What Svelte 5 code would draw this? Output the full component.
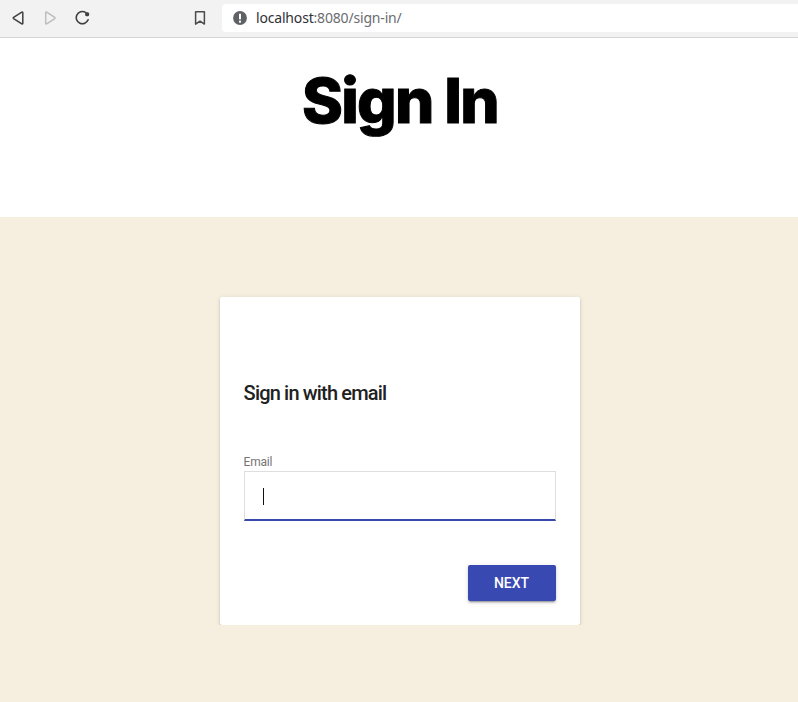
<script>
  let email = $state('');
</script>

<div class="window">
  <header class="toolbar">
    <div class="nav">
      <svg width="14" height="16" viewBox="0 0 14 16" fill="none" stroke="#3f3f3f" stroke-width="1.5" stroke-linejoin="round"><path d="M9.8 2.1 L1.6 7.4 Q1 8 1.6 8.6 L9.8 13.9 Q10.8 14.3 10.8 13.2 V2.8 Q10.8 1.7 9.8 2.1 Z" /></svg>
      <svg class="dim" width="14" height="16" viewBox="0 0 14 16" fill="none" stroke="#bdbdbd" stroke-width="1.5" stroke-linejoin="round"><path d="M2.7 2.1 L10.7 7.4 Q11.3 8 10.7 8.6 L2.7 13.9 Q1.7 14.3 1.7 13.2 V2.8 Q1.7 1.7 2.7 2.1 Z" /></svg>
      <svg class="reload" width="16" height="16" viewBox="0 0 16 16" fill="none"><path d="M10.5 2.4 A6.1 6.1 0 1 0 13.1 9.8" stroke="#3f3f3f" stroke-width="1.6" stroke-linecap="round" /><path d="M10.3 2.2 H12.8 Q14.1 2.4 14.1 3.6 V5 Q13.9 6.3 12.7 6.3 H11.4 Q10.1 6.1 10.1 5 Z" fill="#3f3f3f" /></svg>
    </div>
    <svg class="bookmark" width="12" height="16" viewBox="0 0 12 16" fill="none" stroke="#4b4b4b" stroke-width="1.5" stroke-linejoin="round"><path d="M1.6 1.8 H10.4 V14.1 L6 11.2 L1.6 14.1 Z" /></svg>
    <div class="address">
      <svg width="14" height="14" viewBox="0 0 14 14"><circle cx="7" cy="7" r="6.9" fill="#5f6164" /><rect x="6" y="2.7" width="2" height="5.6" fill="#fff" /><rect x="6" y="9.6" width="2" height="2" fill="#fff" /></svg>
      <span class="url"><b>localhost</b>:8080/sign-in/</span>
    </div>
  </header>

  <div class="title"><h1>Sign In</h1></div>

  <main>
    <div class="clip">
      <form class="card" onsubmit={(e) => e.preventDefault()}>
        <h2>Sign in with email</h2>
        <label for="email">Email</label>
        <div class="field">
          <span class="caret"></span>
          <input id="email" type="email" bind:value={email} />
        </div>
        <div class="actions"><button type="submit">NEXT</button></div>
      </form>
    </div>
  </main>
</div>

<style>
  :global(body) { margin: 0; overflow: hidden; }
  .window {
    width: 798px;
    height: 702px;
    display: flex;
    flex-direction: column;
    background: #fff;
    overflow: hidden;
  }
  svg { display: block; flex: none; }
  .toolbar {
    box-sizing: border-box;
    height: 38px;
    flex: none;
    display: flex;
    align-items: center;
    background: #f2f2f2;
    border-bottom: 1px solid #d5d5d5;
    padding: 0 0 1px 12px;
  }
  .nav { display: flex; width: 182px; }
  .dim { margin-left: 18px; }
  .reload { margin-left: 17px; }
  .address {
    flex: 1;
    height: 28px;
    margin-left: 16px;
    padding-left: 11px;
    display: flex;
    align-items: center;
    gap: 9px;
    background: #fff;
    border-radius: 4px 0 0 4px;
  }
  .url {
    font: 14px/20px "Noto Sans", "Open Sans", sans-serif;
    letter-spacing: -0.18px;
    color: #6a6c6f;
    white-space: nowrap;
  }
  .url b { font-weight: 400; color: #303134; }
  .title {
    height: 179px;
    flex: none;
    text-align: center;
  }
  h1 {
    margin: 0;
    padding: 26px 0 0 2px;
    font: 800 62px/74px Inter, sans-serif;
    -webkit-text-stroke: 1px #000;
    letter-spacing: -1.75px;
    color: #000;
  }
  main {
    flex: 1;
    display: flex;
    justify-content: center;
    align-items: flex-start;
    background: #f6eedf;
    padding: 70px 0 0 2px;
  }
  .clip { padding: 10px 10px 0; overflow: hidden; }
  .card {
    box-sizing: border-box;
    width: 360px;
    height: 328px;
    padding: 84px 24px 24px;
    background: #fff;
    border-radius: 2px;
    box-shadow: 0 2px 2px 0 rgba(0, 0, 0, .14), 0 3px 1px -2px rgba(0, 0, 0, .2), 0 1px 5px 0 rgba(0, 0, 0, .12);
    font-family: Roboto, sans-serif;
  }
  h2 {
    margin: 0 0 0 -0.4px;
    font-size: 20px;
    line-height: 24px;
    font-weight: 500;
    letter-spacing: -0.83px;
    color: #212121;
  }
  label {
    display: block;
    margin: 49px 0 0 -0.4px;
    font-size: 12px;
    line-height: 16px;
    letter-spacing: -0.24px;
    color: #757575;
  }
  .field {
    box-sizing: border-box;
    height: 50px;
    margin-top: 1px;
    display: flex;
    align-items: center;
    border: 1px solid #dedede;
    border-bottom: 2px solid #3949ab;
    padding: 2px 18px 0;
  }
  .caret { width: 1px; height: 17px; background: #111; }
  input {
    flex: 1;
    min-width: 0;
    border: 0;
    outline: 0;
    padding: 0;
    background: none;
    font: 16px Roboto, sans-serif;
  }
  .actions { display: flex; justify-content: flex-end; margin-top: 44px; }
  button {
    width: 88px;
    height: 36px;
    border: 0;
    border-radius: 2px;
    padding: 0 1px 0 0;
    background: #3949b2;
    color: #fff;
    font: 500 14px/36px Roboto, sans-serif;
    box-shadow: 0 2px 2px 0 rgba(0, 0, 0, .14), 0 3px 1px -2px rgba(0, 0, 0, .2), 0 1px 5px 0 rgba(0, 0, 0, .12);
  }
</style>
